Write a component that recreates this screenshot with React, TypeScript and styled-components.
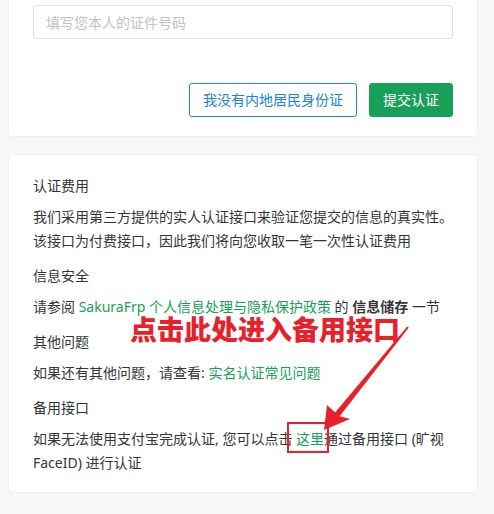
import React from "react";
import styled, { createGlobalStyle } from "styled-components";

const GlobalStyle = createGlobalStyle`
  html, body {
    margin: 0;
    padding: 0;
    background: #f7f7fa;
    overflow: hidden;
  }
  body {
    font-family: "Noto Sans", "Noto Sans CJK SC", sans-serif;
    font-size: 14px;
    color: #333639;
  }
`;

const Page = styled.div`
  display: flex;
  flex-direction: column;
  gap: 17px;
  padding: 0 16px 20px 8px;
`;

const Card = styled.div<{ $pull?: number }>`
  position: relative;
  background: #fff;
  border: 1px solid #efeff5;
  border-radius: 3px;
  margin-top: ${(p) => (p.$pull ? `-${p.$pull}px` : "0")};
`;

const FormBody = styled.div`
  padding: 24px 24px 19px;
  display: flex;
  flex-direction: column;
`;

const Input = styled.input`
  box-sizing: border-box;
  height: 34px;
  width: 100%;
  border: 1px solid #e0e0e6;
  border-radius: 3px;
  padding: 0 12px;
  font-family: inherit;
  font-size: 14px;
  color: #333639;
  outline: none;
  &::placeholder {
    color: #c2c2c2;
  }
`;

const Actions = styled.div`
  margin-top: 44px;
  display: flex;
  justify-content: flex-end;
  gap: 12px;
`;

const Button = styled.button<{ $variant: "ghost" | "primary" }>`
  box-sizing: border-box;
  height: 34px;
  padding: 0 13px;
  border-radius: 3px;
  font-family: inherit;
  font-size: 14px;
  line-height: 1;
  cursor: pointer;
  border: 1px solid ${(p) => (p.$variant === "primary" ? "#18a058" : "#2080f0")};
  background: ${(p) => (p.$variant === "primary" ? "#18a058" : "#fff")};
  color: ${(p) => (p.$variant === "primary" ? "#fff" : "#2080f0")};
`;

const InfoBody = styled.div`
  padding: 19px 24px 17px;
  display: flex;
  flex-direction: column;
  gap: 11px;
`;

const Section = styled.section`
  display: flex;
  flex-direction: column;
  gap: 7px;
`;

const Title = styled.div`
  line-height: 24px;
`;

const Para = styled.p`
  margin: 0;
  line-height: 24px;
`;

const Link = styled.a`
  color: #18a058;
  text-decoration: none;
`;

const Strong = styled.b`
  font-weight: 700;
`;

const Callout = styled.div`
  position: absolute;
  left: 121px;
  top: 161px;
  font-size: 27px;
  line-height: 27px;
  font-weight: 900;
  color: #e8202a;
  white-space: nowrap;
  pointer-events: none;
`;

const Highlight = styled.div`
  position: absolute;
  left: 278px;
  top: 267px;
  width: 42px;
  height: 31px;
  box-sizing: border-box;
  border: 2px solid #e3242b;
  pointer-events: none;
`;

const ArrowLayer = styled.svg`
  position: absolute;
  left: 0;
  top: 0;
  width: 100%;
  height: 100%;
  overflow: visible;
  pointer-events: none;
`;

export default function App() {
  return (
    <>
      <GlobalStyle />
      <Page>
        <Card $pull={20}>
          <FormBody>
            <Input placeholder="填写您本人的证件号码" />
            <Actions>
              <Button $variant="ghost">我没有内地居民身份证</Button>
              <Button $variant="primary">提交认证</Button>
            </Actions>
          </FormBody>
        </Card>
        <Card>
          <InfoBody>
            <Section>
              <Title>认证费用</Title>
              <Para>
                我们采用第三方提供的实人认证接口来验证您提交的信息的真实性。
                <br />
                该接口为付费接口，因此我们将向您收取一笔一次性认证费用
              </Para>
            </Section>
            <Section>
              <Title>信息安全</Title>
              <Para>
                请参阅 <Link>SakuraFrp 个人信息处理与隐私保护政策</Link> 的{" "}
                <Strong>信息储存</Strong> 一节
              </Para>
            </Section>
            <Section>
              <Title>其他问题</Title>
              <Para>
                如果还有其他问题，请查看: <Link>实名认证常见问题</Link>
              </Para>
            </Section>
            <Section>
              <Title>备用接口</Title>
              <Para>
                如果无法使用支付宝完成认证, 您可以点击 <Link>这里</Link>通过备用接口 (旷视 FaceID) 进行认证
              </Para>
            </Section>
          </InfoBody>
          <Callout>点击此处进入备用接口</Callout>
          <Highlight />
          <ArrowLayer>
            <g transform="translate(-9,-155)">
              <polygon
                fill="#e8202a"
                points="407.2,326.4 408.8,327.6 339.7,416.3 350,419 324,430 327,405 335.1,412.5"
              />
            </g>
          </ArrowLayer>
        </Card>
      </Page>
    </>
  );
}
